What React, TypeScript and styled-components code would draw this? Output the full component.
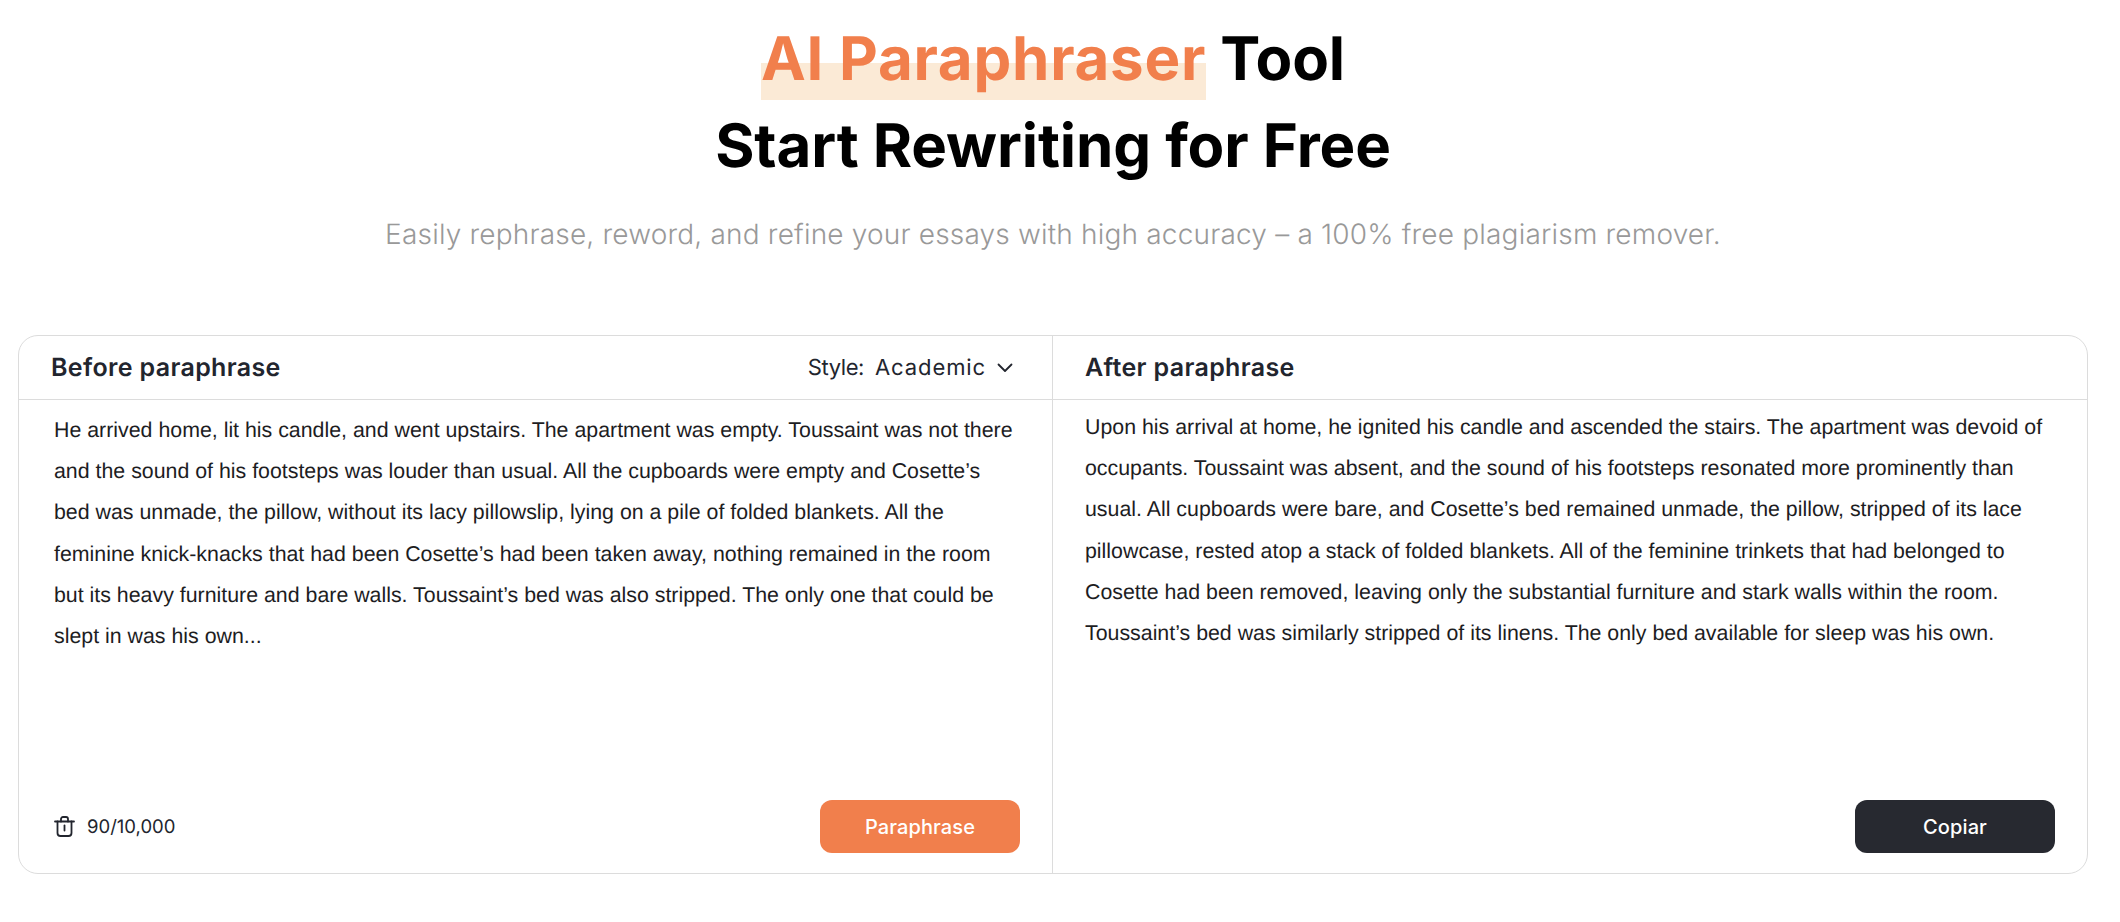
import * as React from 'react';
import styled, { createGlobalStyle } from 'styled-components';

const HEADING_FONT = `Inter, "Noto Sans", sans-serif`;
const BODY_FONT = `"Liberation Sans", Arial, sans-serif`;

const GlobalStyle = createGlobalStyle`
  html, body {
    margin: 0;
    padding: 0;
    background: #ffffff;
    text-rendering: geometricPrecision;
  }
`;

const Page = styled.div`
  width: 2106px;
  padding: 16px 18px 0;
  box-sizing: border-box;
  font-family: ${HEADING_FONT};
`;

const Hero = styled.header`
  text-align: center;
  margin-bottom: 80px;
`;

const Title = styled.h1`
  margin: 0;
  font-size: 60px;
  font-weight: 650;
  line-height: 87px;
  letter-spacing: -0.1px;
  color: #000000;
`;

const Highlight = styled.span`
  display: inline-block;
  color: #f17f4c;
  letter-spacing: 0.75px;
  background: linear-gradient(#fbead6, #fbead6) no-repeat 0 47px / 100% 37px;
`;

const Subtitle = styled.p`
  margin: 23px 0 0;
  font-size: 28px;
  font-weight: 300;
  line-height: 42px;
  letter-spacing: 0.19px;
  color: #999999;
`;

const Card = styled.section`
  display: grid;
  grid-template-columns: 1fr 1fr;
  height: 539px;
  box-sizing: border-box;
  border: 1px solid #dcdcdc;
  border-radius: 20px;
  background: #ffffff;
`;

const Panel = styled.div<{ $divided?: boolean }>`
  display: flex;
  flex-direction: column;
  min-width: 0;
  ${(props) => (props.$divided ? 'border-right: 1px solid #dcdcdc;' : '')}
`;

const PanelHeader = styled.div<{ $inset: number }>`
  display: flex;
  align-items: center;
  justify-content: space-between;
  height: 63px;
  padding: 0 39px 0 ${(props) => props.$inset}px;
  border-bottom: 1px solid #dcdcdc;
  flex: none;
`;

const PanelTitle = styled.h2`
  margin: 0;
  font-size: 25px;
  font-weight: 600;
  letter-spacing: 0.35px;
  color: #22252e;
`;

const StyleSelect = styled.div`
  display: flex;
  align-items: center;
  font-size: 22px;
  letter-spacing: -0.4px;
  color: #22252e;
`;

const StyleValue = styled.span`
  margin-left: 11px;
  margin-right: 11px;
  letter-spacing: 0.9px;
`;

const PanelBody = styled.p<{ $inset: number; $top: number; $end: number }>`
  flex: 1;
  margin: 0;
  padding: ${(props) => props.$top}px ${(props) => props.$end}px 0 ${(props) => props.$inset}px;
  font-family: ${BODY_FONT};
  font-size: 21.35px;
  line-height: 41.2px;
  color: #1d1d1f;
`;

const PanelFooter = styled.div<{ $end?: boolean }>`
  display: flex;
  align-items: center;
  justify-content: ${(props) => (props.$end ? 'flex-end' : 'space-between')};
  padding: 0 32px 20px 35px;
  flex: none;
`;

const Counter = styled.div`
  display: flex;
  align-items: center;
  gap: 12px;
  font-size: 18.5px;
  color: #22252e;
`;

const ActionButton = styled.button<{ $tone: 'orange' | 'dark' }>`
  width: 200px;
  height: 53px;
  border: none;
  border-radius: 12px;
  background: ${(props) => (props.$tone === 'orange' ? '#f17f4c' : '#272930')};
  color: #ffffff;
  font-family: ${HEADING_FONT};
  font-size: 20px;
  font-weight: 450;
  letter-spacing: 0.1px;
`;

const Icon = styled.svg`
  display: block;
  flex: none;
  fill: none;
  stroke: #22252e;
  stroke-width: 1.8;
  stroke-linecap: round;
  stroke-linejoin: round;
`;

const ChevronIcon = () => (
  <Icon width="16" height="10" viewBox="0 0 16 10">
    <path d="M1.5 1.5 8 8l6.5-6.5" />
  </Icon>
);

const TrashIcon = () => (
  <Icon width="21" height="21" viewBox="0 0 21 21">
    <path d="M1 5.5h19" />
    <path d="M7 5.5V3a2 2 0 0 1 2-2h3a2 2 0 0 1 2 2v2.5" />
    <path d="M3.5 5.5V17a3 3 0 0 0 3 3h8a3 3 0 0 0 3-3V5.5" />
    <path d="M10.5 9.5v5" />
  </Icon>
);

const BEFORE_TEXT =
  'He arrived home, lit his candle, and went upstairs. The apartment was empty. Toussaint was not there and the sound of his footsteps was louder than usual. All the cupboards were empty and Cosette’s bed was unmade, the pillow, without its lacy pillowslip, lying on a pile of folded blankets. All the feminine knick-knacks that had been Cosette’s had been taken away, nothing remained in the room but its heavy furniture and bare walls. Toussaint’s bed was also stripped. The only one that could be slept in was his own...';

const AFTER_TEXT =
  'Upon his arrival at home, he ignited his candle and ascended the stairs. The apartment was devoid of occupants. Toussaint was absent, and the sound of his footsteps resonated more prominently than usual. All cupboards were bare, and Cosette’s bed remained unmade, the pillow, stripped of its lace pillowcase, rested atop a stack of folded blankets. All of the feminine trinkets that had belonged to Cosette had been removed, leaving only the substantial furniture and stark walls within the room. Toussaint’s bed was similarly stripped of its linens. The only bed available for sleep was his own.';

export default function App() {
  return (
    <>
      <GlobalStyle />
      <Page>
        <Hero>
          <Title>
            <Highlight>AI Paraphraser</Highlight> Tool
            <br />
            Start Rewriting for Free
          </Title>
          <Subtitle>
            Easily rephrase, reword, and refine your essays with high accuracy – a 100% free plagiarism remover.
          </Subtitle>
        </Hero>
        <Card>
          <Panel $divided>
            <PanelHeader $inset={32}>
              <PanelTitle>Before paraphrase</PanelTitle>
              <StyleSelect>
                Style:
                <StyleValue>Academic</StyleValue>
                <ChevronIcon />
              </StyleSelect>
            </PanelHeader>
            <PanelBody $inset={35} $top={10} $end={38}>{BEFORE_TEXT}</PanelBody>
            <PanelFooter>
              <Counter>
                <TrashIcon />
                90/10,000
              </Counter>
              <ActionButton $tone="orange">Paraphrase</ActionButton>
            </PanelFooter>
          </Panel>
          <Panel>
            <PanelHeader $inset={32}>
              <PanelTitle>After paraphrase</PanelTitle>
            </PanelHeader>
            <PanelBody $inset={32} $top={7} $end={26}>{AFTER_TEXT}</PanelBody>
            <PanelFooter $end>
              <ActionButton $tone="dark">Copiar</ActionButton>
            </PanelFooter>
          </Panel>
        </Card>
      </Page>
    </>
  );
}
